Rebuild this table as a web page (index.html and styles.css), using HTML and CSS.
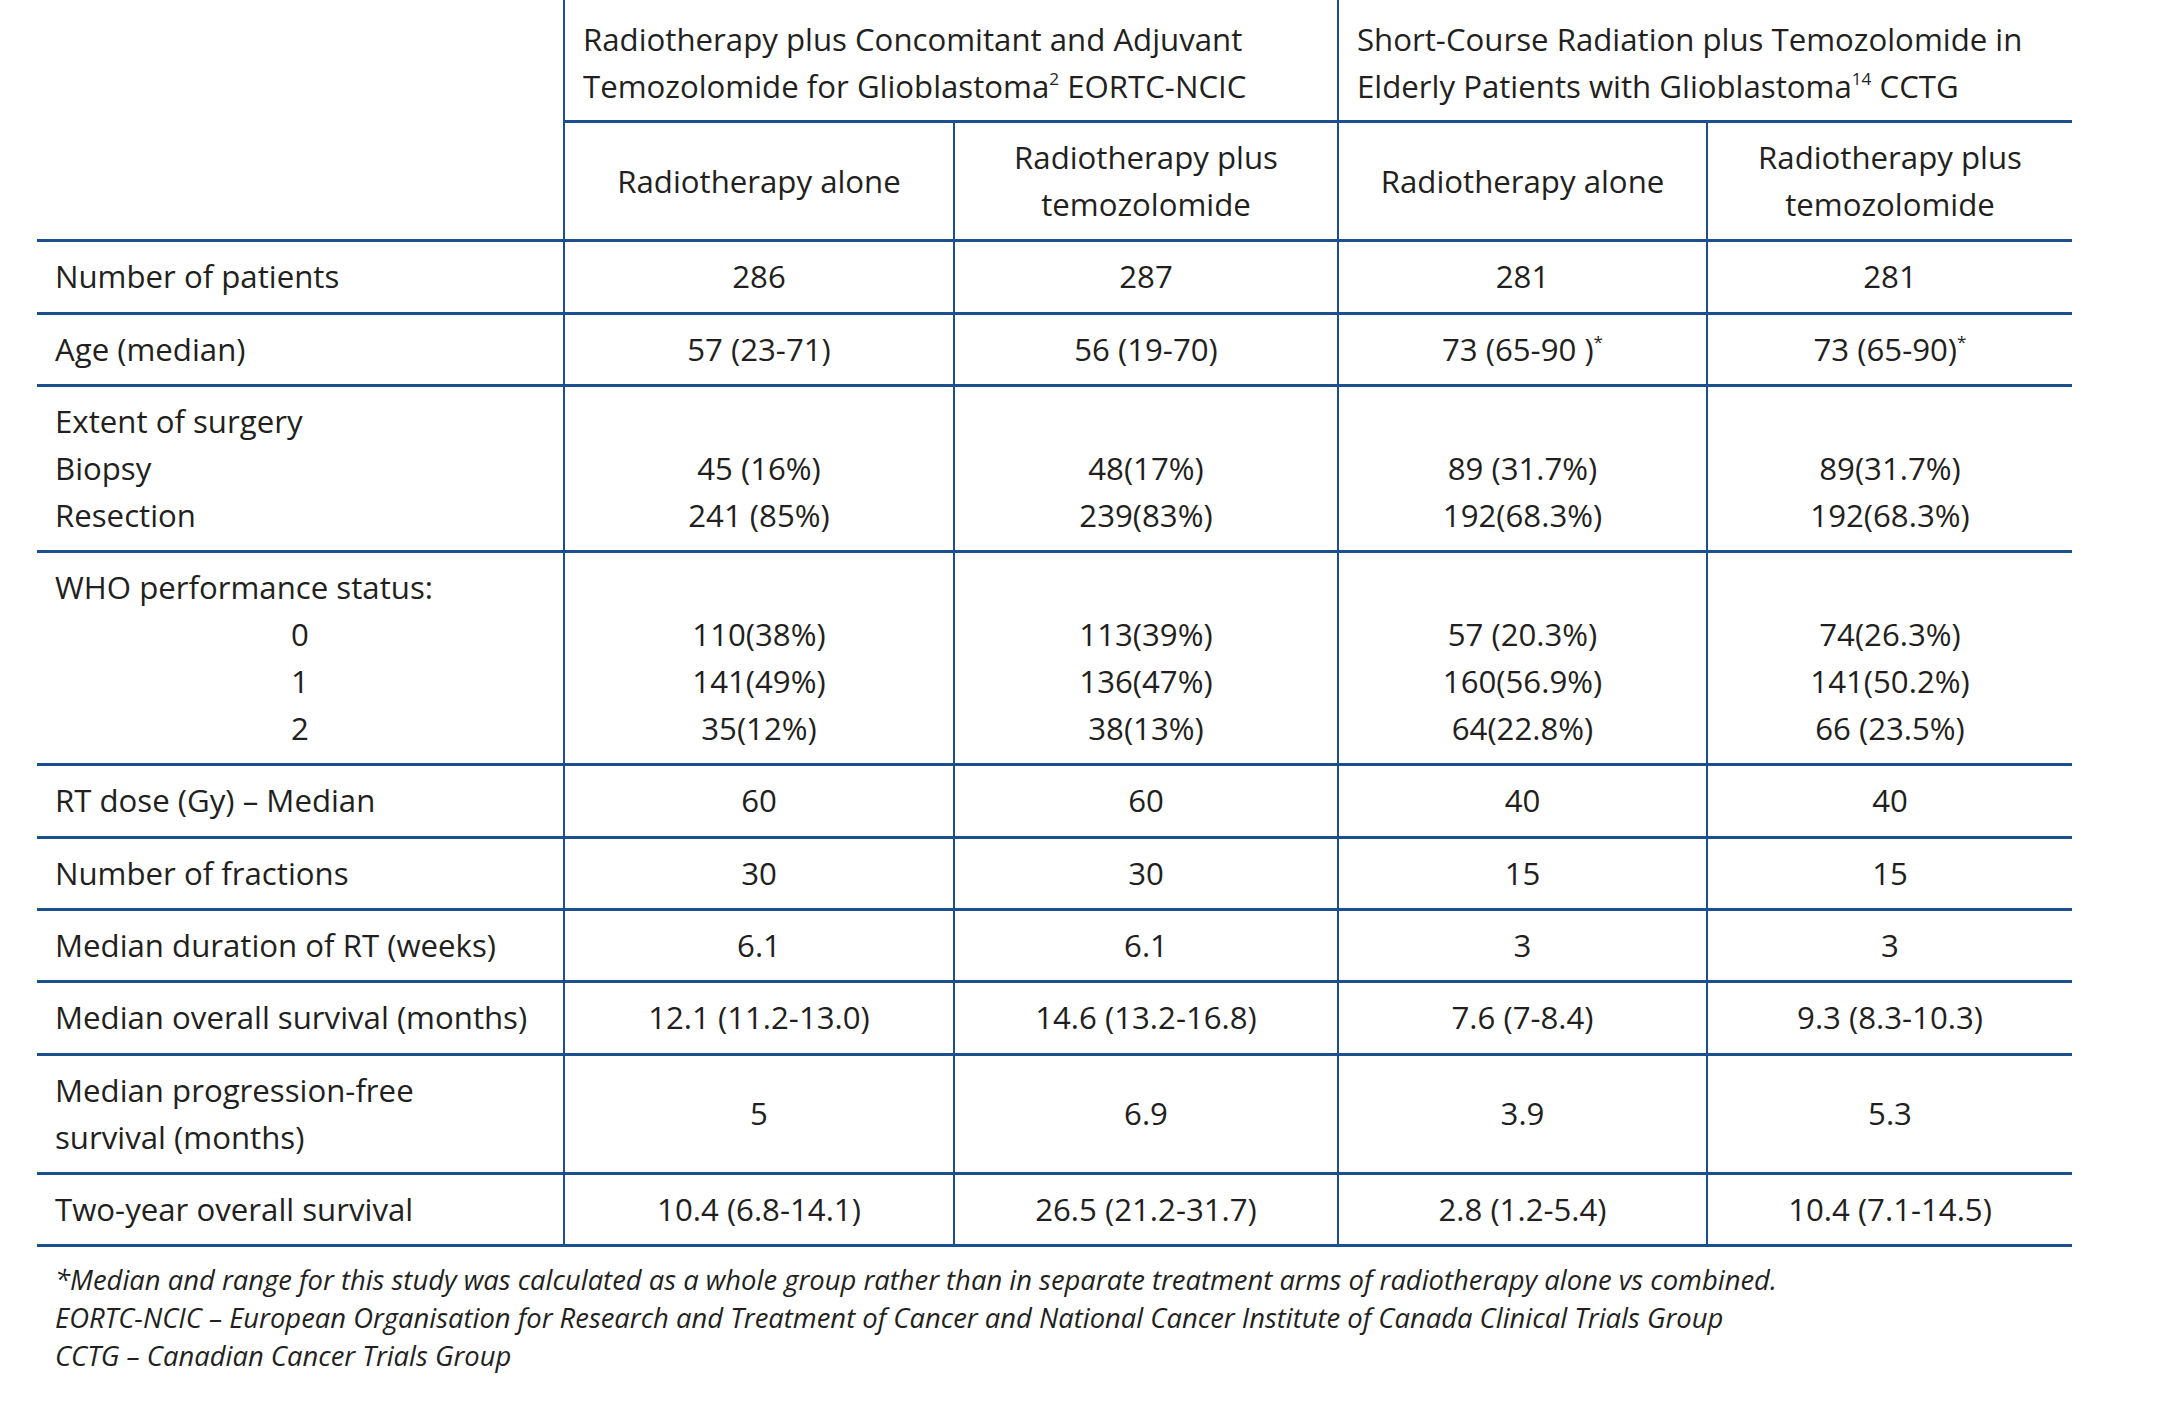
FILE: index.html
```html
<!DOCTYPE html>
<html lang="en">
<head>
<meta charset="utf-8">
<title>Glioblastoma trials comparison</title>
<link rel="stylesheet" href="styles.css">
</head>
<body>
<div class="page">
  <table class="trials">
    <colgroup>
      <col class="c-label">
      <col class="c-a1">
      <col class="c-a2">
      <col class="c-b1">
      <col class="c-b2">
    </colgroup>
    <thead>
      <tr class="group-row">
        <th class="corner" rowspan="2"></th>
        <th class="group" colspan="2">Radiotherapy plus Concomitant and Adjuvant Temozolomide for Glioblastoma<sup>2</sup> EORTC-NCIC</th>
        <th class="group last" colspan="2">Short-Course Radiation plus Temozolomide in Elderly Patients with Glioblastoma<sup>14</sup> CCTG</th>
      </tr>
      <tr class="arm-row">
        <th class="arm">Radiotherapy alone</th>
        <th class="arm">Radiotherapy plus<br>temozolomide</th>
        <th class="arm">Radiotherapy alone</th>
        <th class="arm last">Radiotherapy plus<br>temozolomide</th>
      </tr>
    </thead>
    <tbody>
      <tr>
        <td class="label">Number of patients</td>
        <td>286</td><td>287</td><td>281</td><td class="last">281</td>
      </tr>
      <tr>
        <td class="label">Age (median)</td>
        <td>57 (23-71)</td><td>56 (19-70)</td><td>73 (65-90 )<sup>*</sup></td><td class="last">73 (65-90)<sup>*</sup></td>
      </tr>
      <tr class="top">
        <td class="label">Extent of surgery<br>Biopsy<br>Resection</td>
        <td>&nbsp;<br>45 (16%)<br>241 (85%)</td>
        <td>&nbsp;<br>48(17%)<br>239(83%)</td>
        <td>&nbsp;<br>89 (31.7%)<br>192(68.3%)</td>
        <td class="last">&nbsp;<br>89(31.7%)<br>192(68.3%)</td>
      </tr>
      <tr class="top">
        <td class="label">WHO performance status:<span class="grade">0</span><span class="grade">1</span><span class="grade">2</span></td>
        <td>&nbsp;<br>110(38%)<br>141(49%)<br>35(12%)</td>
        <td>&nbsp;<br>113(39%)<br>136(47%)<br>38(13%)</td>
        <td>&nbsp;<br>57 (20.3%)<br>160(56.9%)<br>64(22.8%)</td>
        <td class="last">&nbsp;<br>74(26.3%)<br>141(50.2%)<br>66 (23.5%)</td>
      </tr>
      <tr>
        <td class="label">RT dose (Gy) – Median</td>
        <td>60</td><td>60</td><td>40</td><td class="last">40</td>
      </tr>
      <tr>
        <td class="label">Number of fractions</td>
        <td>30</td><td>30</td><td>15</td><td class="last">15</td>
      </tr>
      <tr>
        <td class="label">Median duration of RT (weeks)</td>
        <td>6.1</td><td>6.1</td><td>3</td><td class="last">3</td>
      </tr>
      <tr>
        <td class="label">Median overall survival (months)</td>
        <td>12.1 (11.2-13.0)</td><td>14.6 (13.2-16.8)</td><td>7.6 (7-8.4)</td><td class="last">9.3 (8.3-10.3)</td>
      </tr>
      <tr>
        <td class="label">Median progression-free<br>survival (months)</td>
        <td>5</td><td>6.9</td><td>3.9</td><td class="last">5.3</td>
      </tr>
      <tr>
        <td class="label">Two-year overall survival</td>
        <td>10.4 (6.8-14.1)</td><td>26.5 (21.2-31.7)</td><td>2.8 (1.2-5.4)</td><td class="last">10.4 (7.1-14.5)</td>
      </tr>
    </tbody>
  </table>
  <div class="notes">
    <p>*Median and range for this study was calculated as a whole group rather than in separate treatment arms of radiotherapy alone vs combined.</p>
    <p>EORTC-NCIC – European Organisation for Research and Treatment of Cancer and National Cancer Institute of Canada Clinical Trials Group</p>
    <p>CCTG – Canadian Cancer Trials Group</p>
  </div>
</div>
</body>
</html>
```

FILE: styles.css
```css
html, body {
  margin: 0;
  padding: 0;
  background: #ffffff;
}

.page {
  padding: 0 0 0 37px;
  font-family: "Open Sans", "Liberation Sans", sans-serif;
  color: #231f20;
}

.trials {
  border-collapse: collapse;
  table-layout: fixed;
  width: 2035px;
  font-size: 31.2px;
  line-height: 47px;
}

.c-label { width: 527px; }
.c-a1 { width: 390px; }
.c-a2 { width: 384px; }
.c-b1 { width: 369px; }
.c-b2 { width: 365px; }

.trials th,
.trials td {
  font-weight: normal;
  padding: 11px 18px 11.3px;
  border-bottom: 3px solid #1b4f8e;
  border-left: 2px solid #1b4f8e;
  vertical-align: middle;
  text-align: center;
}

.trials th.corner {
  border-left: none;
}

.trials th.group {
  text-align: left;
  padding: 16px 18px 10px;
}

.trials td.label {
  text-align: left;
  border-left: none;
}

.trials tr.top td {
  vertical-align: top;
}

.grade {
  display: block;
  text-align: center;
}

.trials sup {
  font-size: 0.55em;
  line-height: 0;
  vertical-align: 0.75em;
}

.notes {
  margin-top: 14px;
  padding-left: 18px;
  font-style: italic;
  font-size: 27.4px;
  line-height: 38px;
}

.notes p {
  margin: 0;
}
```
